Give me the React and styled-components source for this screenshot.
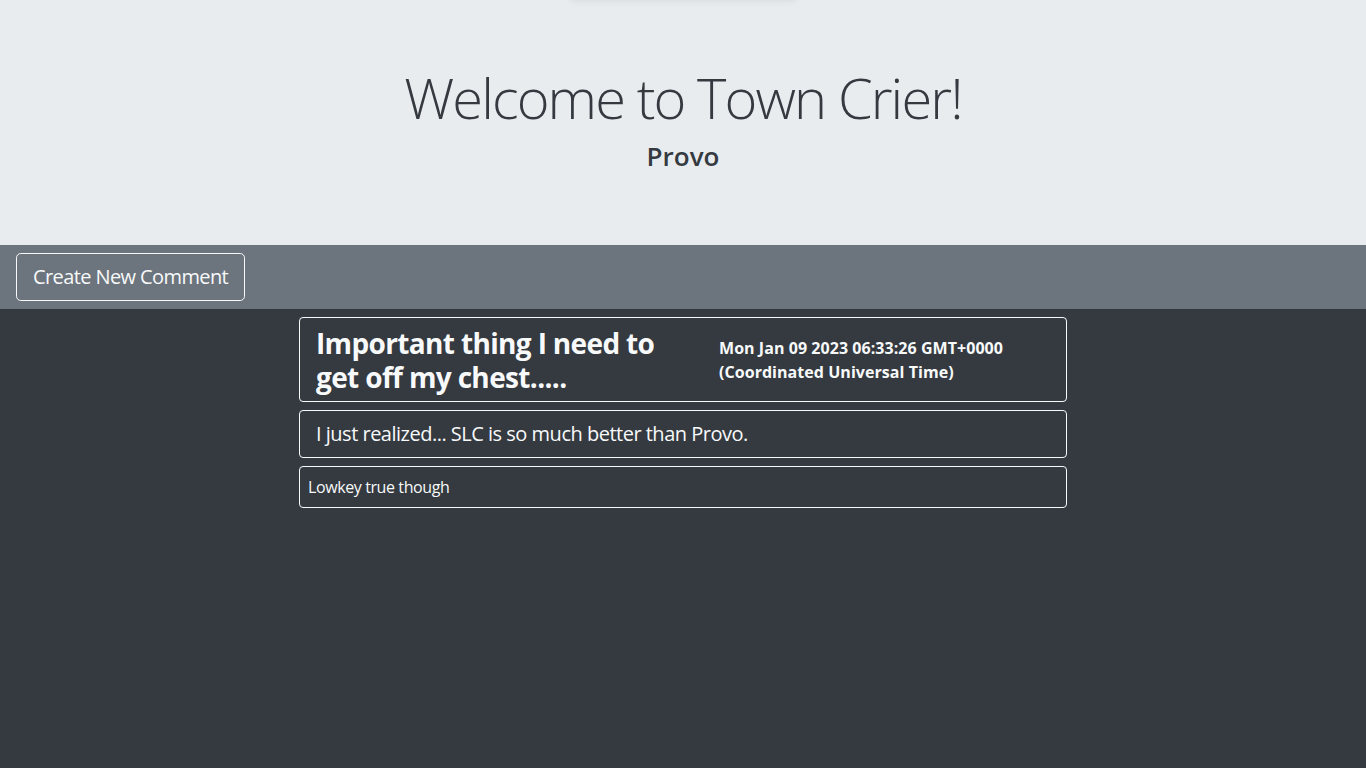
import React from "react";
import styled, { createGlobalStyle } from "styled-components";

const Global = createGlobalStyle`
  html, body { margin: 0; padding: 0; }
  body {
    background: #343a40;
    font-family: "Open Sans", "Noto Sans", "Liberation Sans", sans-serif;
    color: #212529;
    min-height: 768px;
  }
  * { box-sizing: border-box; }
`;

const Page = styled.div`
  min-height: 768px;
  background: #343a40;
  display: flex;
  flex-direction: column;
`;

const Jumbotron = styled.header`
  position: relative;
  background: #e9ecef;
  height: 245px;
  padding-top: 64px;
  display: flex;
  flex-direction: column;
  align-items: center;
  overflow: hidden;
`;

const TopShadow = styled.div`
  position: absolute;
  top: -14px;
  left: 50%;
  transform: translateX(-50%);
  width: 230px;
  height: 14px;
  border-radius: 8px;
  box-shadow: 0 2px 6px rgba(0, 0, 0, 0.06);
`;

const Title = styled.h1`
  margin: 0 0 10px;
  font-size: 56px;
  font-weight: 300;
  line-height: 1.2;
  letter-spacing: -1.9px;
  color: #343a40;
`;

const City = styled.h3`
  margin: 0;
  font-size: 26px;
  font-weight: 600;
  line-height: 1.2;
  color: #343a40;
`;

const Toolbar = styled.nav`
  background: #6c757d;
  padding: 8px 16px;
  display: flex;
  align-items: center;
`;

const OutlineButton = styled.button`
  font-family: inherit;
  font-size: 20px;
  line-height: 1.5;
  letter-spacing: -0.6px;
  padding: 8px 16px;
  border: 1px solid #f8f9fa;
  border-radius: 4.8px;
  background: transparent;
  color: #f8f9fa;
  cursor: pointer;
`;

const Feed = styled.main`
  width: 768px;
  margin: 0 auto;
  padding-top: 8px;
  display: flex;
  flex-direction: column;
  gap: 8px;
`;

const Card = styled.div`
  border: 1px solid #f8f9fa;
  border-radius: 4px;
  color: #f8f9fa;
  padding: ${(p) => p.$pad};
`;

const HeaderRow = styled.div`
  display: grid;
  grid-template-columns: 1fr 1fr;
  align-items: center;
`;

const PostTitle = styled.h3`
  margin: 0;
  padding-top: 1px;
  margin-bottom: -1px;
  font-size: 28px;
  font-weight: 700;
  line-height: 1.2;
  letter-spacing: -0.65px;
`;

const PostDate = styled.h6`
  margin: 0;
  padding-left: 36px;
  font-size: 16px;
  font-weight: 700;
  line-height: 24px;
  letter-spacing: 0.05px;
`;

const Body = styled.p`
  margin: 0;
  font-size: ${(p) => p.$size};
  line-height: 1.5;
  letter-spacing: ${(p) => p.$track};
`;

export default function App() {
  return (
    <>
      <Global />
      <Page>
        <Jumbotron>
          <TopShadow />
          <Title>Welcome to Town Crier!</Title>
          <City>Provo</City>
        </Jumbotron>
        <Toolbar>
          <OutlineButton>Create New Comment</OutlineButton>
        </Toolbar>
        <Feed>
          <Card $pad="8px 16px">
            <HeaderRow>
              <PostTitle>Important thing I need to get off my chest.....</PostTitle>
              <PostDate>
                Mon Jan 09 2023 06:33:26 GMT+0000
                <br />
                (Coordinated Universal Time)
              </PostDate>
            </HeaderRow>
          </Card>
          <Card $pad="8px 16px">
            <Body $size="20px" $track="-0.5px">
              I just realized... SLC is so much better than Provo.
            </Body>
          </Card>
          <Card $pad="8px 8px">
            <Body $size="16px" $track="-0.4px">
              Lowkey true though
            </Body>
          </Card>
        </Feed>
      </Page>
    </>
  );
}
